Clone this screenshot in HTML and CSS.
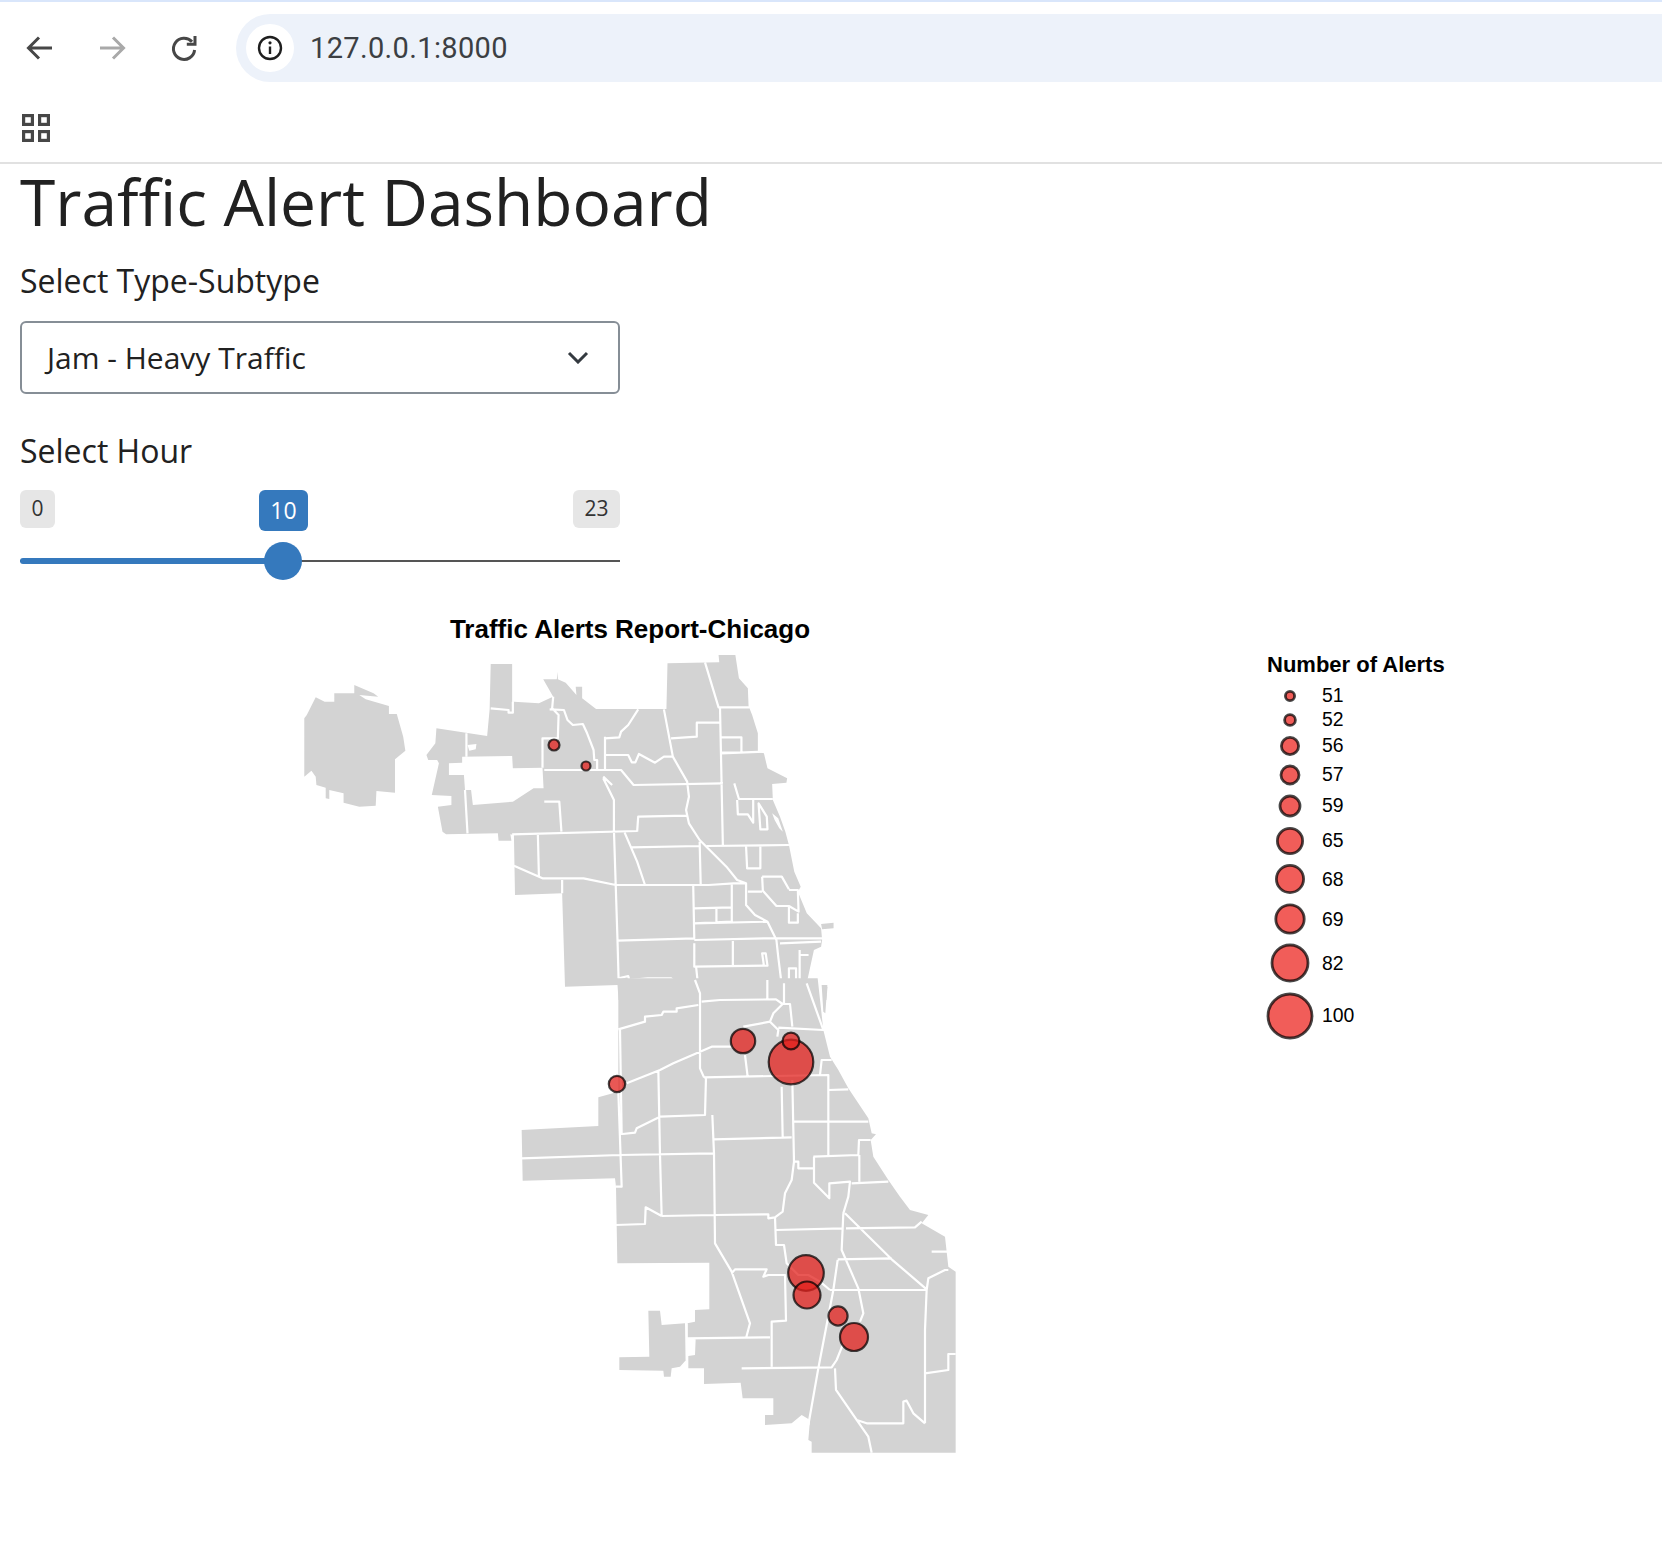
FILE: index.html
```html
<!DOCTYPE html>
<html lang="en">
<head>
<meta charset="utf-8">
<title>Traffic Alert Dashboard</title>
<link rel="stylesheet" href="styles.css">
</head>
<body>
<header class="browser">
  <div class="toolbar">
    <button class="nav-btn"><svg class="nav-icon" viewBox="0 0 30 30"><path d="M27 15H4M14 4.5 3.5 15 14 25.5"/></svg></button>
    <button class="nav-btn is-disabled"><svg class="nav-icon" viewBox="0 0 30 30"><path d="M3 15H26M16 4.5 26.5 15 16 25.5"/></svg></button>
    <button class="nav-btn"><svg class="nav-icon" viewBox="0 0 30 30"><path d="M23 8.8A10.6 10.6 0 1 0 25.6 17"/><path d="M26 3V11.2H17.8"/></svg></button>
    <div class="omnibox">
      <span class="site-info"><svg class="info-icon" viewBox="0 0 26 26"><circle cx="13" cy="13" r="11"/><path d="M13 11.5V19"/><circle class="solid" cx="13" cy="7.8" r="1.6"/></svg></span>
      <span class="url">127.0.0.1:8000</span>
    </div>
  </div>
  <div class="bookmarks">
    <svg class="apps-icon" viewBox="0 0 28 28"><rect x="1.6" y="1.6" width="8.8" height="8.8"/><rect x="17.6" y="1.6" width="8.8" height="8.8"/><rect x="1.6" y="17.6" width="8.8" height="8.8"/><rect x="17.6" y="17.6" width="8.8" height="8.8"/></svg>
  </div>
</header>

<main>
  <div class="controls">
    <h1>Traffic Alert Dashboard</h1>
    <label class="field-label">Select Type-Subtype</label>
    <div class="select">
      <span>Jam - Heavy Traffic</span>
      <svg class="chevron" viewBox="0 0 22 13"><path d="M2 2 11 11 20 2"/></svg>
    </div>
    <label class="field-label field-hour">Select Hour</label>
    <div class="slider">
      <div class="ticks"><span class="tick">0</span><span class="tick">23</span></div>
      <span class="tick-current">10</span>
      <div class="track"><div class="track-fill"></div><div class="thumb"></div></div>
    </div>
  </div>

  <svg class="chart" viewBox="0 600 1662 954" role="img" aria-label="Traffic Alerts Report-Chicago">
    <text class="chart-title" x="630" y="638">Traffic Alerts Report-Chicago</text>

    <g class="map" transform="translate(280 600) scale(0.35714 0.33333)">
      <path class="land" d="M68 530V355L75 345 100 292 125 305H152V280H208V255L262 280 275 290 222 285 240 298 305 318V342H327L345 410 351 452 322 478V578L270 573 268 617 222 620 178 608V580L138 570V597L128 595V563L102 555 100 530 88 512Z"/>
      <path class="land" d="M590 192H650V310L655 305 725 310 755 295 765 290 737 238H775L778 215V238L800 248 830 285 828 260H846V295L885 327H1082L1085 190 1230 187 1228 165H1275L1285 235 1310 265 1312 318 1322 345 1338 400V455L1355 460 1365 505 1420 535 1418 548 1378 552 1380 600 1400 650 1415 695 1425 735 1440 815 1458 860 1450 875 1475 940 1515 985 1518 1020 1515 1040 1495 1050 1475 1148 1495 1150 1505 1200H948L945 1155 798 1160 790 880 658 885 655 705 645 703 648 722H612L610 700 465 703 455 695 442 620 480 615V588L425 585 445 490 440 480H415L410 465 435 430 438 385 580 408 587 328Z"/>
      <path class="land" d="M1515 972 1550 968V985L1518 988ZM1520 1160H1533L1530 1200H1522Z"/>
      <path class="gap" d="M473 490 510 488V470L650 468 652 505 735 503 738 565H710L652 605 540 615 535 570H518L515 525H473ZM525 435 550 432 548 448 530 452ZM1378 640 1395 655 1408 695 1398 685 1385 660Z"/>
      <path class="road" d="M1518 995H1555M590 325 640 330V338H652V305M765 290 762 325 780 345 778 415H735V503M755 328 795 330 805 360 820 375 848 372 860 400 878 450 880 480H888V510M740 510H955L990 555 1240 550M910 410V510M910 415 950 412 955 395 975 375 1003 328M912 465H975L985 487H995L1005 462 1050 488 1075 470H1100L1140 545 1145 590 1137 630 1145 670 1175 720 1250 800 1280 840 1305 850V915L1330 945 1365 965 1390 1020 1395 1070 1410 1200M1075 328 1100 470M1095 415 1167 410V368H1232M1190 187 1228 322H1315M1232 322 1240 735M1235 412H1292V458H1235M1235 460 1355 455M1272 550 1285 597H1380M1280 600 1282 643H1310L1325 668V600M1340 610 1345 688H1365L1363 650ZM905 535 935 600V690L940 855 945 1020 948 1135M1000 695 1003 650 1138 647M650 703 1000 693M740 605H782L788 695M522 400V470M518 570 525 700M722 703 725 830M655 797 735 835H850L940 855H1200L1270 850H1305M790 840V880M965 698 1000 785 1022 855M985 742 1175 738M1175 725 1178 855M1195 738 1425 735M1305 740 1308 805H1345V738M1350 830H1405L1425 868M1350 830 1352 872 1390 918H1425V968H1450V940M1310 875H1350M1425 870H1450L1452 935 1425 918M1157 855 1160 1015 945 1022M1160 925 1265 922M1222 925V965M1265 850V965L1160 970M1160 970 1365 965M1160 1020 1360 1015 1520 1015M1268 1018V1095M1160 1030V1100L1365 1097 1360 1060H1350L1355 1097M1165 1100 1175 1200M948 1135 975 1128 978 1140 1030 1135H1095L1100 1140H1160M1400 1030 1515 1025M1455 1050V1200M1458 1065H1480M1425 1105H1445V1148H1425ZM1410 1150H1475M905 530 930 555"/>
    </g>

    <g class="map" transform="translate(480 980) scale(0.33333)">
      <path class="land" d="M1013 -5 1030 150 1050 230 1075 270 1105 325 1165 415 1175 460 1188 463 1172 480 1180 530 1225 600 1260 650 1290 690 1345 705 1325 730 1395 770 1405 860 1427 875V1418H995V1385L985 1380 990 1320 965 1305 935 1330 855 1335V1305H880V1255H788L782 1208 672 1212V1165H625V1128L645 1125 647 1078 622 1075V1030L645 1025V990L688 988V848L412 850 408 620 405 595 128 602 125 450 355 438V352L415 335V-5Z"/>
      <path class="land" d="M505 992H540L545 1035 615 1030 618 1140 600 1160 575 1165 572 1190H552L550 1172 418 1170V1132L508 1130ZM1025 15H1042L1036 100 1030 95Z"/>
      <path class="road" d="M415 148 495 125V110L545 105 550 95H590V85L655 75M645 0 660 40V265L672 292M665 65 720 60 888 58 908 72 880 100 870 125 790 140M870 125 895 150 892 170M908 72H930L937 140M862 0V58M912 10V72M980 10 1030 150 895 143M440 310 540 270 580 250 695 200H760M795 225 803 290M672 292 1045 285V525M535 270 540 525 545 708M678 292 675 405 540 410 470 445 465 458 428 462M420 150 425 465M415 335 425 620H408M125 535 420 525 700 520M697 405 702 520 705 790 755 875 810 1030 798 1075M700 478 935 472M905 320 908 470M937 300 942 545 935 600 915 640 908 695 885 712 888 795H912L920 850 955 885H985L1020 905 1050 930M942 545H955V565H1000M1020 285 1025 240H1055M1045 330 1105 328M940 425H1165M1000 530 1135 525 1137 480H1172M1138 525V605M1002 530V608L1048 655V610L1110 605 1105 650 1090 700M1115 610 1225 605M1095 700 1235 838 1340 928M1090 700 1085 810 1135 925 1150 1000 1140 1025M1073 840 1060 930 1015 1165 985 1335M1073 838 1235 835M1098 745 1305 742 1325 725M888 750 1090 745M1355 815H1405M1050 930H1340L1345 895 1395 870H1405M1340 928 1335 1050V1180L1405 1170V1122H1427M1335 1180V1330M545 708 705 705 865 703V715L885 712M408 735 495 732 497 682 545 708M755 880 765 868H860L850 890 865 885H915L918 1022 875 1025V1160M622 1075 870 1072M785 1165 1055 1162 1070 1140 1090 1090M1065 1165 1068 1230 1130 1320 1165 1370 1175 1418M1130 1320 1160 1330H1270V1265L1280 1262 1300 1300 1335 1330M620 1030V1140"/>
    </g>

    <g class="markers">
      <circle cx="554" cy="745" r="5.5"/>
      <circle cx="586" cy="766" r="4.5"/>
      <circle cx="617" cy="1084" r="8.2"/>
      <circle cx="743" cy="1041" r="12.2"/>
      <circle cx="791" cy="1062" r="22.3"/>
      <circle cx="791" cy="1041" r="8.4"/>
      <circle cx="806" cy="1273" r="17.8"/>
      <circle cx="807" cy="1295" r="13.5"/>
      <circle cx="838" cy="1316" r="9.6"/>
      <circle cx="854" cy="1337" r="14"/>
    </g>

    <text class="legend-title" x="1267" y="672">Number of Alerts</text>
    <g class="legend-marks">
      <circle cx="1290" cy="696" r="4.6"/>
      <circle cx="1290" cy="720" r="5.4"/>
      <circle cx="1290" cy="746" r="8.6"/>
      <circle cx="1290" cy="775" r="9"/>
      <circle cx="1290" cy="806" r="10"/>
      <circle cx="1290" cy="841" r="12.6"/>
      <circle cx="1290" cy="879" r="13.6"/>
      <circle cx="1290" cy="919" r="14.2"/>
      <circle cx="1290" cy="963" r="18"/>
      <circle cx="1290" cy="1016" r="22"/>
    </g>
    <g class="legend-labels">
      <text x="1322" y="702">51</text>
      <text x="1322" y="726">52</text>
      <text x="1322" y="752">56</text>
      <text x="1322" y="781">57</text>
      <text x="1322" y="812">59</text>
      <text x="1322" y="847">65</text>
      <text x="1322" y="886">68</text>
      <text x="1322" y="926">69</text>
      <text x="1322" y="970">82</text>
      <text x="1322" y="1022">100</text>
    </g>
  </svg>
</main>
</body>
</html>
```

FILE: styles.css
```css
* {
  box-sizing: border-box;
}

html,
body {
  margin: 0;
  background: #fff;
}

body {
  font-family: "Open Sans", "Noto Sans", sans-serif;
  color: #212121;
}

.browser {
  height: 164px;
  padding-top: 2px;
  background: linear-gradient(#d9e6fb 2px, #fff 2px);
  border-bottom: 2px solid #e1e1e1;
}

.toolbar {
  display: flex;
  align-items: center;
  gap: 24px;
  height: 68px;
  margin-top: 12px;
  padding-left: 16px;
}

.nav-btn {
  display: flex;
  align-items: center;
  justify-content: center;
  width: 48px;
  height: 48px;
  padding: 0;
  border: 0;
  background: none;
}

.nav-icon {
  width: 30px;
  height: 30px;
  fill: none;
  stroke: #474747;
  stroke-width: 3;
}

.is-disabled .nav-icon {
  stroke: #a9a9a9;
}

.omnibox {
  display: flex;
  flex: 1;
  align-items: center;
  height: 68px;
  margin-left: 4px;
  padding-left: 10px;
  border-radius: 34px 0 0 34px;
  background: #edf2fa;
}

.site-info {
  display: flex;
  align-items: center;
  justify-content: center;
  width: 48px;
  height: 48px;
  border-radius: 50%;
  background: #fff;
}

.info-icon {
  width: 26px;
  height: 26px;
  fill: none;
  stroke: #1f1f1f;
  stroke-width: 2.4;
}

.info-icon .solid {
  fill: #1f1f1f;
  stroke: none;
}

.url {
  margin-left: 16px;
  font-family: Roboto, sans-serif;
  font-size: 29px;
  letter-spacing: 0.35px;
  color: #3c3f43;
}

.bookmarks {
  display: flex;
  align-items: center;
  height: 80px;
  padding: 12px 0 0 22px;
}

.apps-icon {
  width: 28px;
  height: 28px;
  fill: none;
  stroke: #474747;
  stroke-width: 3.2;
}

.controls {
  height: 437px;
  padding: 0 20px;
}

h1 {
  margin: -1px 0 17px;
  font-size: 64px;
  font-weight: 400;
  line-height: 77px;
  white-space: nowrap;
}

.field-label {
  display: block;
  height: 48px;
  margin-bottom: 16px;
  font-size: 32px;
  line-height: 48px;
}

.field-hour {
  margin-top: 33px;
  margin-bottom: 15px;
}

.select {
  display: flex;
  align-items: center;
  justify-content: space-between;
  width: 600px;
  height: 73px;
  padding: 0 29px 0 25px;
  border: 2px solid #868e96;
  border-radius: 6px;
  font-size: 30px;
}

.chevron {
  width: 22px;
  height: 13px;
  margin-top: -1px;
  fill: none;
  stroke: #343a40;
  stroke-width: 3;
}

.slider {
  position: relative;
  width: 600px;
}

.ticks {
  display: flex;
  justify-content: space-between;
}

.tick {
  height: 38px;
  padding: 0 11.5px;
  border-radius: 6px;
  background: #e6e6e6;
  font-size: 21px;
  line-height: 36px;
  color: #333;
}

.tick-current {
  position: absolute;
  top: 0;
  left: 239px;
  width: 49px;
  height: 41px;
  border-radius: 6px;
  background: #3579bd;
  color: #fff;
  font-size: 23px;
  line-height: 41px;
  text-align: center;
}

.track {
  position: relative;
  height: 2px;
  margin-top: 32px;
  background: #555;
}

.track-fill {
  position: absolute;
  top: -2px;
  left: 0;
  width: 263px;
  height: 6px;
  border-radius: 3px 0 0 3px;
  background: #3579bd;
}

.thumb {
  position: absolute;
  top: -18px;
  left: 244px;
  width: 38px;
  height: 38px;
  border-radius: 50%;
  background: #3579bd;
}

.chart {
  display: block;
  width: 1662px;
  height: 954px;
}

.chart-title {
  font-family: "Liberation Sans", Arial, sans-serif;
  font-size: 26px;
  font-weight: 700;
  text-anchor: middle;
  fill: #000;
}

.land {
  fill: #d3d3d3;
}

.gap {
  fill: #fff;
}

.road {
  fill: none;
  stroke: #fff;
  stroke-width: 2.2px;
  stroke-linejoin: round;
  vector-effect: non-scaling-stroke;
}

.markers circle {
  fill: rgb(225, 32, 28);
  fill-opacity: 0.75;
  stroke: #000;
  stroke-opacity: 0.72;
  stroke-width: 2.2px;
}

.legend-title {
  font-family: "Liberation Sans", Arial, sans-serif;
  font-size: 22px;
  font-weight: 700;
  fill: #000;
}

.legend-marks circle {
  fill: rgb(235, 30, 25);
  fill-opacity: 0.72;
  stroke: #000;
  stroke-opacity: 0.72;
  stroke-width: 2.8px;
}

.legend-labels text {
  font-family: "Liberation Sans", Arial, sans-serif;
  font-size: 19.4px;
  fill: #000;
}
```
